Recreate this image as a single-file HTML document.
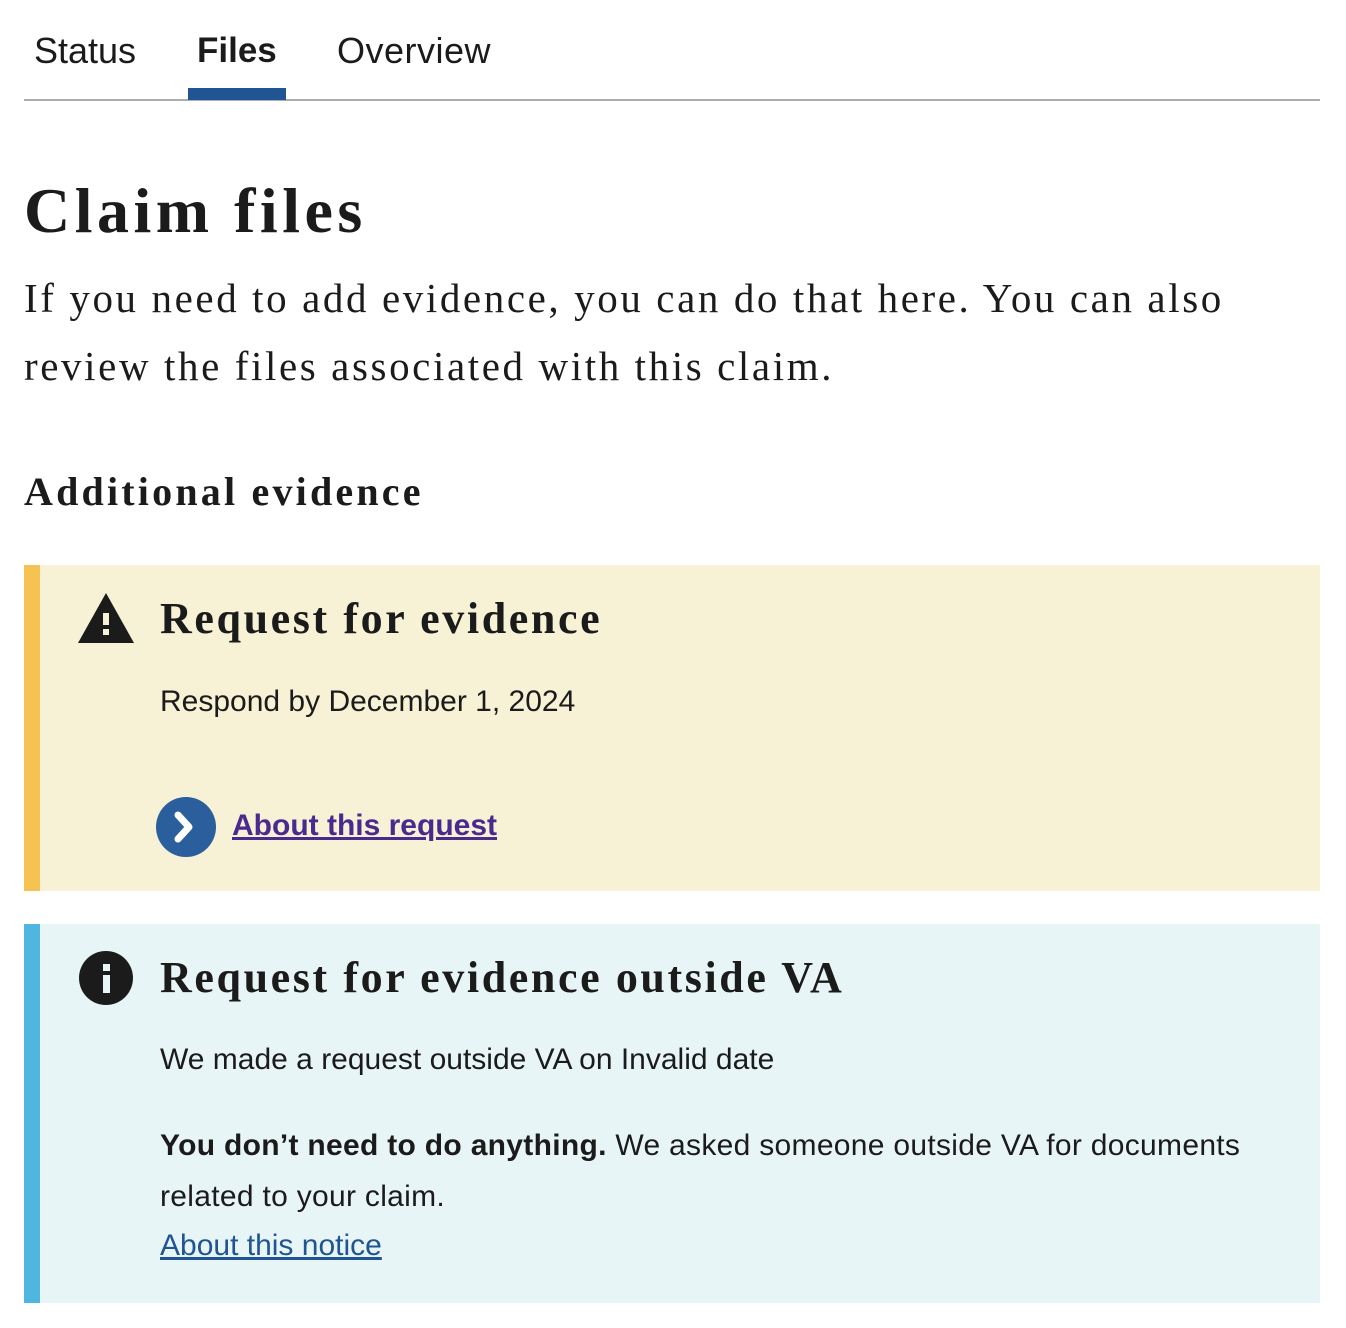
<!DOCTYPE html>
<html><head><style>
body{margin:0;background:#fff;color:#1b1b1b;width:1346px;height:1328px;overflow:hidden;position:relative;font-family:"Liberation Sans",sans-serif}
.a{position:absolute;white-space:nowrap}
.serif{font-family:"Liberation Serif",serif}
</style></head><body>
<div class="a" style="left:34px;top:30px;font-size:36px">Status</div>
<div class="a" style="left:197px;top:31px;font-size:35px;font-weight:bold">Files</div>
<div class="a" style="left:337px;top:30px;font-size:36px;letter-spacing:0.5px">Overview</div>
<div class="a" style="left:24px;top:99px;width:1296px;height:2px;background:#a9aeb1"></div>
<div class="a" style="left:188px;top:88px;width:98px;height:12px;background:#205493"></div>
<div class="a serif" style="left:24px;top:174px;font-size:64px;font-weight:bold;letter-spacing:4.5px">Claim files</div>
<div class="a serif" style="left:24px;top:264px;font-size:41px;line-height:68px;letter-spacing:2.6px">If you need to add evidence, you can do that here. You can also<br>review the files associated with this claim.</div>
<div class="a serif" style="left:24px;top:468px;font-size:40px;font-weight:bold;letter-spacing:3.2px">Additional evidence</div>

<div class="a" style="left:24px;top:565px;width:1296px;height:326px;background:#f7f1d5;border-left:16px solid #f6c251;box-sizing:border-box"></div>
<svg class="a" style="left:77px;top:592px" width="58" height="52" viewBox="0 0 58 52"><polygon points="29,1 57,51 1,51" fill="#1b1b1b"/><rect x="26" y="21" width="6" height="12" fill="#f7f1d5"/><rect x="26" y="37" width="6" height="6" fill="#f7f1d5"/></svg>
<div class="a serif" style="left:160px;top:593px;font-size:44px;font-weight:bold;letter-spacing:2.6px">Request for evidence</div>
<div class="a" style="left:160px;top:685px;font-size:30px">Respond by December 1, 2024</div>
<svg class="a" style="left:156px;top:797px" width="60" height="60" viewBox="0 0 60 60"><circle cx="30" cy="30" r="30" fill="#2a5e9c"/><path d="M22 18 L33 30 L22 42" stroke="#fff" stroke-width="7" fill="none" stroke-linecap="round" stroke-linejoin="round"/></svg>
<div class="a" style="left:232px;top:809px;font-size:30px;font-weight:bold;color:#4a2a8f;text-decoration:underline">About this request</div>

<div class="a" style="left:24px;top:924px;width:1296px;height:379px;background:#e8f5f7;border-left:16px solid #4fb6e0;box-sizing:border-box"></div>
<svg class="a" style="left:79px;top:951px" width="54" height="54" viewBox="0 0 54 54"><circle cx="27" cy="27" r="27" fill="#1b1b1b"/><rect x="24" y="13" width="7" height="7" fill="#e8f5f7"/><rect x="24" y="24" width="7" height="18" fill="#e8f5f7"/></svg>
<div class="a serif" style="left:160px;top:952px;font-size:44px;font-weight:bold;letter-spacing:2.6px">Request for evidence outside VA</div>
<div class="a" style="left:160px;top:1043px;font-size:30px">We made a request outside VA on Invalid date</div>
<div class="a" style="left:160px;top:1120px;font-size:30px;line-height:51px;letter-spacing:0.3px"><b>You don’t need to do anything.</b> We asked someone outside VA for documents<br>related to your claim.</div>
<div class="a" style="left:160px;top:1229px;font-size:30px;color:#205493;text-decoration:underline">About this notice</div>
</body></html>
